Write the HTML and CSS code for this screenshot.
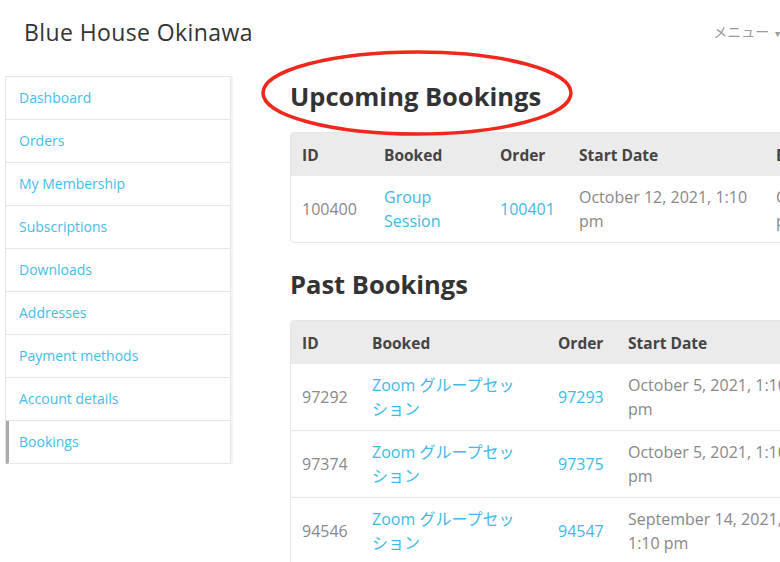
FILE: index.html
```html
<!DOCTYPE html>
<html lang="ja">
<head>
    <meta charset="UTF-8">
    <title>Bookings - Blue House Okinawa</title>
    <link rel="stylesheet" href="styles.css">
</head>
<body>
    <header class="site-header">
        <div class="site-title">Blue House Okinawa</div>
        <div class="menu">メニュー <span class="menu-arrow">&#9662;</span></div>
    </header>

    <div class="layout">
        <nav class="sidebar">
            <a href="#">Dashboard</a>
            <a href="#">Orders</a>
            <a href="#">My Membership</a>
            <a href="#">Subscriptions</a>
            <a href="#">Downloads</a>
            <a href="#">Addresses</a>
            <a href="#">Payment methods</a>
            <a href="#">Account details</a>
            <a href="#" class="active">Bookings</a>
        </nav>

        <main class="content">
            <h2 class="section-title">
                Upcoming Bookings
                <svg class="highlight" width="316" height="90" viewBox="0 0 316 90">
                    <ellipse cx="158" cy="45" rx="154" ry="41" fill="none" stroke="#f0281c" stroke-width="3.5"/>
                </svg>
            </h2>
            <table class="bookings upcoming">
                <thead>
                    <tr>
                        <th class="col-id">ID</th>
                        <th class="col-booked">Booked</th>
                        <th class="col-order">Order</th>
                        <th class="col-start">Start Date</th>
                        <th class="col-end">End Date</th>
                    </tr>
                </thead>
                <tbody>
                    <tr>
                        <td>100400</td>
                        <td><a href="#">Group Session</a></td>
                        <td><a href="#">100401</a></td>
                        <td>October 12, 2021, 1:10 pm</td>
                        <td>October 12, 2021, 2:10 pm</td>
                    </tr>
                </tbody>
            </table>

            <h2 class="section-title">Past Bookings</h2>
            <table class="bookings past">
                <thead>
                    <tr>
                        <th class="col-id">ID</th>
                        <th class="col-booked">Booked</th>
                        <th class="col-order">Order</th>
                        <th class="col-start">Start Date</th>
                        <th class="col-end">End Date</th>
                    </tr>
                </thead>
                <tbody>
                    <tr>
                        <td>97292</td>
                        <td class="booked"><a href="#">Zoom グループセッション</a></td>
                        <td><a href="#">97293</a></td>
                        <td>October 5, 2021, 1:10 pm</td>
                        <td>October 5, 2021, 2:10 pm</td>
                    </tr>
                    <tr>
                        <td>97374</td>
                        <td class="booked"><a href="#">Zoom グループセッション</a></td>
                        <td><a href="#">97375</a></td>
                        <td>October 5, 2021, 1:10 pm</td>
                        <td>October 5, 2021, 2:10 pm</td>
                    </tr>
                    <tr>
                        <td>94546</td>
                        <td class="booked"><a href="#">Zoom グループセッション</a></td>
                        <td><a href="#">94547</a></td>
                        <td>September 14, 2021, 1:10 pm</td>
                        <td>September 14, 2021, 2:10 pm</td>
                    </tr>
                </tbody>
            </table>
        </main>
    </div>
</body>
</html>
```

FILE: styles.css
```css
body {
    margin: 0;
    padding: 0;
    width: 780px;
    height: 562px;
    overflow: hidden;
    background: #ffffff;
    font-family: 'Open Sans', 'Noto Sans CJK JP', sans-serif;
    color: #333;
}

a {
    color: #3fb9e8;
    text-decoration: none;
}

.site-header {
    display: flex;
    justify-content: space-between;
    align-items: center;
    height: 64px;
    padding-left: 24px;
}

.site-title {
    font-size: 23px;
    color: #333;
    letter-spacing: 0.4px;
}

.menu {
    font-size: 14px;
    color: #9a9a9a;
    white-space: nowrap;
    margin-bottom: 2px;
}

.menu-arrow {
    font-size: 10px;
    margin-left: 2px;
}

.layout {
    display: flex;
    align-items: flex-start;
    padding-top: 12px;
}

.sidebar {
    flex: none;
    width: 224px;
    margin-left: 5px;
    border: 1px solid #e6e6e6;
    border-bottom: none;
    box-shadow: 2px 0 0 #f3f3f3;
}

.sidebar a {
    display: block;
    height: 42px;
    line-height: 42px;
    padding-left: 13px;
    border-bottom: 1px solid #e6e6e6;
    font-size: 14px;
    color: #45bdea;
}

.sidebar a.active {
    border-left: 3px solid #aaaaaa;
    padding-left: 10px;
}

.content {
    flex: none;
    width: 800px;
    margin-left: 59px;
}

.section-title {
    position: relative;
    margin: 4px 0 20px;
    font-size: 25.5px;
    line-height: 32px;
    font-weight: 700;
    color: #333;
}

.highlight {
    position: absolute;
    left: -31px;
    top: -32px;
}

.bookings {
    border-collapse: separate;
    border-spacing: 0;
    border: 1px solid #e6e6e6;
    border-radius: 4px;
    font-size: 16px;
    margin-bottom: 25px;
}

.bookings th {
    height: 43px;
    padding: 0 11px;
    background: #ebebeb;
    text-align: left;
    font-size: 15.5px;
    font-weight: 700;
    color: #444;
    white-space: nowrap;
}

.bookings td {
    height: 48px;
    padding: 9px 11px;
    line-height: 24px;
    color: #888;
    border-top: 1px solid #e6e6e6;
}

.bookings tbody tr:first-child td {
    border-top: none;
}

.past td.booked {
    padding-right: 27px;
}

.upcoming .col-id { width: 60px; }
.upcoming .col-booked { width: 94px; }
.upcoming .col-order { width: 57px; }
.upcoming .col-start { width: 175px; }

.past .col-id { width: 48px; }
.past .col-booked { width: 164px; }
.past .col-order { width: 48px; }
.past .col-start { width: 175px; }

.col-end {
    width: 180px;
}
```
